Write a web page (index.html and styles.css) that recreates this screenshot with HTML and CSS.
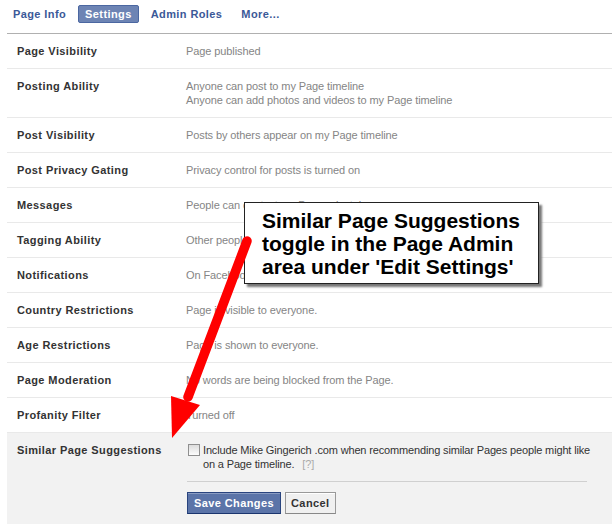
FILE: index.html
```html
<!DOCTYPE html>
<html>
<head>
<meta charset="utf-8">
<link rel="stylesheet" href="styles.css">
</head>
<body>
<div class="page">
  <nav class="tabs">
    <a class="tab">Page Info</a>
    <a class="tab active">Settings</a>
    <a class="tab">Admin Roles</a>
    <a class="tab">More...</a>
  </nav>
  <div class="settings">
    <div class="row"><div class="label">Page Visibility</div><div class="value">Page published</div></div>
    <div class="row"><div class="label">Posting Ability</div><div class="value">Anyone can post to my Page timeline<br>Anyone can add photos and videos to my Page timeline</div></div>
    <div class="row"><div class="label">Post Visibility</div><div class="value">Posts by others appear on my Page timeline</div></div>
    <div class="row"><div class="label">Post Privacy Gating</div><div class="value">Privacy control for posts is turned on</div></div>
    <div class="row"><div class="label">Messages</div><div class="value">People can contact my Page privately.</div></div>
    <div class="row"><div class="label">Tagging Ability</div><div class="value">Other people can tag photos posted on my Page.</div></div>
    <div class="row"><div class="label">Notifications</div><div class="value">On Facebook</div></div>
    <div class="row"><div class="label">Country Restrictions</div><div class="value">Page is visible to everyone.</div></div>
    <div class="row"><div class="label">Age Restrictions</div><div class="value">Page is shown to everyone.</div></div>
    <div class="row"><div class="label">Page Moderation</div><div class="value">No words are being blocked from the Page.</div></div>
    <div class="row"><div class="label">Profanity Filter</div><div class="value">Turned off</div></div>
    <div class="row edit">
      <div class="label">Similar Page Suggestions</div>
      <div class="value">
        <div class="check-line">
          <span class="checkbox"></span>
          <span class="check-text">Include Mike Gingerich .com when recommending similar Pages people might like<br>on a Page timeline.<span class="help">[?]</span></span>
        </div>
        <div class="actions">
          <button class="btn primary">Save Changes</button>
          <button class="btn">Cancel</button>
        </div>
      </div>
    </div>
  </div>

  <div class="callout">Similar Page Suggestions<br>toggle in the Page Admin<br>area under 'Edit Settings'</div>

  <svg class="arrow" width="612" height="524" viewBox="0 0 612 524">
    <line x1="247" y1="241" x2="188" y2="397" stroke="#f00" stroke-width="9.5" stroke-linecap="round"/>
    <polygon points="171,396 200,405 172,438" fill="#f00"/>
  </svg>
</div>
</body>
</html>
```

FILE: styles.css
```css
html, body {
  margin: 0;
  padding: 0;
  background: #fff;
}

.page {
  position: relative;
  width: 612px;
  height: 524px;
  overflow: hidden;
  font-family: "Liberation Sans", Arial, sans-serif;
  font-size: 11px;
  line-height: 14px;
}

.tabs {
  display: flex;
  gap: 5px;
  padding: 5px 0 0 6px;
  height: 28px;
  box-sizing: border-box;
}

.tab {
  display: block;
  height: 18px;
  line-height: 16px;
  padding: 0 6px;
  border: 1px solid transparent;
  box-sizing: border-box;
  color: #3b5998;
  font-weight: bold;
  letter-spacing: 0.4px;
  border-radius: 2px;
}

.tab.active {
  background: #6d84b4;
  border-color: #4b67a1;
  color: #fff;
}

.settings {
  margin: 5px 0 0 7px;
  border-top: 1px solid #b0b0b0;
}

.row {
  display: flex;
  padding: 10px 0;
  border-bottom: 1px solid #e9e9e9;
}

.label {
  width: 169px;
  padding-left: 10px;
  flex: none;
  font-weight: bold;
  color: #333;
  letter-spacing: 0.4px;
}

.value {
  color: #858585;
  letter-spacing: -0.1px;
}

.row.edit {
  background: #f2f2f2;
  border-bottom: none;
  height: 120px;
}

.check-line {
  display: flex;
  align-items: flex-start;
  width: 420px;
}

.checkbox {
  flex: none;
  width: 12px;
  height: 12px;
  margin: 1px 3px 0 2px;
  box-sizing: border-box;
  border: 1px solid #8f8f8f;
  background: linear-gradient(#dcdcdc, #fdfdfd);
}

.check-text {
  flex: none;
  color: #333;
  white-space: nowrap;
  letter-spacing: -0.15px;
}

.help {
  color: #aaa;
  margin-left: 8px;
}

.actions {
  display: flex;
  gap: 4px;
  width: 400px;
  margin-top: 10px;
  padding-top: 10px;
  margin-left: 1px;
  border-top: 1px solid #d0d0d0;
}

.btn {
  height: 22px;
  padding: 0 5px;
  font-family: "Liberation Sans", Arial, sans-serif;
  font-size: 11px;
  font-weight: bold;
  letter-spacing: 0.4px;
  border: 1px solid #999;
  border-bottom-color: #888;
  background: #f0f0f0;
  color: #333;
  box-shadow: inset 0 1px 0 #fff;
}

.btn.primary {
  background: #5b74a8;
  border-color: #29447e;
  border-bottom-color: #1a356e;
  color: #fff;
  padding: 0 6px;
  box-shadow: inset 0 1px 0 #8a9cc2;
}

.callout {
  position: absolute;
  left: 244px;
  top: 202px;
  width: 295px;
  height: 82px;
  box-sizing: border-box;
  padding: 6px 0 0 17px;
  background: #fff;
  border: 1px solid #222;
  box-shadow: 3px 3px 2px #777;
  font-family: "Liberation Sans", Arial, sans-serif;
  font-size: 21px;
  line-height: 23px;
  font-weight: bold;
  color: #000;
}

.arrow {
  position: absolute;
  left: 0;
  top: 0;
}
```
